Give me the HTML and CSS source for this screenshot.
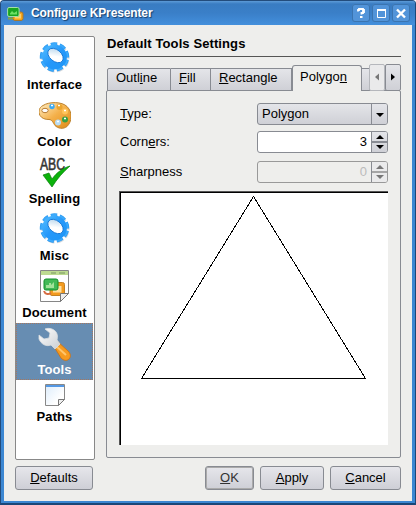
FILE: index.html
```html
<!DOCTYPE html>
<html lang="en">
<head>
<meta charset="utf-8">
<title>Configure KPresenter</title>
<link rel="stylesheet" href="styles.css">
</head>
<body>
<svg class="defs" width="0" height="0">
  <defs>
    <linearGradient id="blue" x2="1" y2="1"><stop stop-color="#55bfff"/><stop offset=".5" stop-color="#2598fa"/><stop offset="1" stop-color="#1e96f6"/></linearGradient>
    <linearGradient id="hole" x2="1" y2="1"><stop stop-color="#a9cde8"/><stop offset=".55" stop-color="#fff"/></linearGradient>
    <linearGradient id="gold" x2="1" y2="1"><stop stop-color="#fff0c8"/><stop offset=".5" stop-color="#f4b04a"/><stop offset="1" stop-color="#de8a18"/></linearGradient>
    <linearGradient id="steel" x2="1" y2="1"><stop stop-color="#fff"/><stop offset="1" stop-color="#c9ced3"/></linearGradient>
    <linearGradient id="sheet" x2="1" y2="1"><stop stop-color="#dcecfb"/><stop offset=".7" stop-color="#fff"/></linearGradient>
    <symbol id="gear" viewBox="0 0 32 32">
      <g transform="rotate(12 15.500 15)">
        <circle cx="16.300" cy="16" r="12.400" fill="none" stroke="#b4bcc4" stroke-width="4" stroke-dasharray="6 2.656" opacity=".6"/>
        <circle cx="15.500" cy="15" r="12.400" fill="none" stroke="#2898f0" stroke-width="4.600" stroke-dasharray="6 2.656"/>
        <circle cx="15.500" cy="15" r="12.400" fill="none" stroke="#3caafc" stroke-width="3.400" stroke-dasharray="5.200 3.456" stroke-dashoffset="-.4"/>
      </g>
      <circle cx="15.500" cy="15" r="12.400" fill="url(#blue)"/>
      <ellipse cx="16.500" cy="13.500" rx="8.800" ry="5.800" transform="rotate(40 16.500 13.500)" fill="url(#hole)" stroke="#1477d6" stroke-width=".9"/>
    </symbol>
  </defs>
</svg>
<div class="window">
  <header class="titlebar">
    <svg class="app-icon" width="17" height="16" viewBox="0 0 17 16"><rect x="6" y="6" width="10" height="8.500" rx="2" fill="#f6a51c" stroke="#a8772a"/><rect x="8" y="8" width="6" height="4.500" fill="#ffcf68"/><rect x=".6" y="1.500" width="11.500" height="9" rx="1.500" fill="#18a522" stroke="#a4dfa8"/><path d="M3 7.500l2-2.500 2 2 3-2v3.500H3" fill="#6ce063"/><path d="M1 12.500h5" stroke="#8fa13d" stroke-width="2"/></svg>
    <h1>Configure KPresenter</h1>
    <div class="wbtn"><svg width="18" height="19"><path d="M6 7.500V6h1V5h4v1h1v2h-1v1H9.500v1.500" fill="none" stroke="#fff" stroke-width="1.800"/><rect x="8" y="12" width="2.500" height="2" fill="#fff"/></svg></div>
    <div class="wbtn"><svg width="18" height="19"><path d="M5.500 5.500h8v8h-8z" fill="none" stroke="#fff"/><path d="M5 5h9v2H5z" fill="#fff"/></svg></div>
    <div class="wbtn"><svg width="18" height="19"><path d="M5 5.500l8 8M13 5.500l-8 8" stroke="#fff" stroke-width="2.400"/></svg></div>
  </header>
  <main class="body">
    <nav class="sidebar">
      <div class="item"><svg width="32" height="32"><use href="#gear"/></svg><span>Interface</span></div>
      <div class="item"><svg width="32" height="32" viewBox="0 0 32 32"><g transform="translate(0 1.500)"><path d="M4 5C10 1 23 1 28 6c6 6 5 15 0 20-4 3-9 2-12-1-2-3-3-6-6-6-4 0-7-1-9-4C-1 11 0 7 4 5z" fill="url(#gold)" stroke="#bd822d" stroke-width="1"/><ellipse cx="6" cy="10" rx="3.200" ry="2.200" fill="#fff" stroke="#b87d34"/><circle cx="13" cy="6" r="2.700" fill="#3ea8ee"/><circle cx="20.500" cy="6.500" r="3" fill="#eba52d"/><circle cx="26" cy="11" r="3" fill="#ffc45a"/><circle cx="26" cy="19" r="3" fill="#37a044"/><circle cx="19" cy="22" r="3" fill="#b7dcf2"/><path d="M12 5h2M19 5h2M25 10h2M25 18h2M18 21h2" stroke="#fff" stroke-width="1.300"/></g></svg><span>Color</span></div>
      <div class="item"><svg class="abc" width="32" height="32" viewBox="0 0 32 32"><text x="1" y="14" textLength="25" lengthAdjust="spacingAndGlyphs">ABC</text><path d="M4 19l6-2 3 6C18 16 24 12 31 10c-7 6-13 13-18 21z" fill="#0bb20b" stroke="#087c0b" stroke-width=".7"/></svg><span>Spelling</span></div>
      <div class="item"><svg width="32" height="32"><use href="#gear"/></svg><span>Misc</span></div>
      <div class="item"><svg width="32" height="32" viewBox="0 0 32 32"><path d="M1.500.5h28v23l-8 8h-20z" fill="#fff" stroke="#868686"/><path d="M2 1h27v4H2z" fill="#bddb91"/><path d="M12 3h5M20 3h6" stroke="#799661"/><rect x="11" y="12.500" width="14.500" height="13" rx="2" fill="#f39b1e" stroke="#c48123"/><rect x="14" y="16" width="8.500" height="6.500" fill="#ffe0a0"/><rect x="5" y="9" width="14" height="11" rx="2" fill="#43b956" stroke="#138d2a"/><path d="M7 15h3v-2h2v2l3-3v6H7z" fill="#a2e299"/><path d="M5 21c1 3 4 4 7 2" stroke="#d56d43" stroke-width="2" fill="none"/><path d="M21.500 31.500v-8h8z" fill="#eee" stroke="#777"/></svg><span>Document</span></div>
      <div class="item selected"><svg width="34" height="34" viewBox="0 0 34 34"><path d="M15 18l4-4 11 10c3 3 3 6 1 8s-5 2-8-1z" fill="#f69b20" stroke="#c9761f"/><path d="M18 19l10 9" stroke="#ffc66c" stroke-width="2"/><path d="M7 2c5-2 11 1 12 5 1 3 0 5 0 6l3 4-5 5-4-4C8 20 3 17 1 12V8l5 4 5-1 1-5z" fill="url(#steel)" stroke="#d9dde0" stroke-width=".8"/></svg><span>Tools</span></div>
      <div class="item paths"><svg width="22" height="23" viewBox="0 0 22 23"><path d="M1.500.5h19v15l-6 6h-13z" fill="url(#sheet)" stroke="#888"/><path d="M2 1h18v2H2z" fill="#5498e4"/><path d="M14.500 21.500v-6h6z" fill="#eee" stroke="#777"/></svg><span>Paths</span></div>
    </nav>
    <section class="page">
      <h2>Default Tools Settings</h2>
      <div class="tabs">
        <div class="tab outline">Outl<u>i</u>ne</div><div class="tab fill"><u>F</u>ill</div><div class="tab rect"><u>R</u>ectangle</div><div class="tab active">Polygo<u>n</u></div><div class="tab cut"></div>
        <div class="scroll off"><svg width="14" height="24"><path d="M9 8.500v7l-4-3.500z" fill="#777"/></svg></div><div class="scroll"><svg width="14" height="24"><path d="M5 8.500v7l4-3.500z"/></svg></div>
      </div>
      <div class="panel">
        <div class="row"><label><u>T</u>ype:</label><div class="field combo"><span>Polygon</span><i><svg width="15" height="20"><path d="M4 9h8l-4 4z"/></svg></i></div></div>
        <div class="row"><label>Corn<u>e</u>rs:</label><div class="field spin"><span>3</span><i><svg width="15" height="20"><path d="M4 7h8L8 3zM4 13h8l-4 4z"/><path d="M0 10h15" stroke="#888b92" stroke-width="2"/></svg></i></div></div>
        <div class="row last"><label><u>S</u>harpness</label><div class="field spin disabled"><span>0</span><i><svg width="15" height="20"><path d="M4 7h8L8 3zM4 13h8l-4 4z" fill="#777"/><path d="M0 10h15" stroke="#a5a5a5" stroke-width="2"/></svg></i></div></div>
        <div class="preview"><svg width="267" height="252" shape-rendering="crispEdges"><path d="M132.500 3.500L20.500 185.500H244.500z" fill="none" stroke="#000"/></svg></div>
      </div>
    </section>
    <footer class="buttons">
      <button class="defaults"><u>D</u>efaults</button><button class="ok"><u>O</u>K</button><button class="apply"><u>A</u>pply</button><button class="cancel"><u>C</u>ancel</button>
    </footer>
  </main>
</div>
</body>
</html>
```

FILE: styles.css
```css
* { box-sizing: border-box; }
body { margin: 0; background: #fff; font: 13px/16px "Liberation Sans", Arial, sans-serif; color: #000; }
svg { display: block; flex: none; }
.defs { position: absolute; }
u { text-decoration: underline; text-decoration-thickness: 1px; text-underline-offset: 1px; text-decoration-skip-ink: none; }
.window { width: 416px; height: 505px; border: solid; border-width: 1px 1px 2px 1px; border-color: #234c7c #1a4778 #1a4778 #234c7c; background: #3c87d2; border-radius: 4px 4px 0 0; padding: 0 3px 2px; }
.titlebar { height: 24px; margin: 0 -3px; padding: 3px 5px 0 6px; display: flex; background: linear-gradient(#5d9bd8 0, #397cc2 3px, #3a7fc8 50%, #438fdc); border-radius: 3px 3px 0 0; }
.app-icon { margin-top: 2px; }
h1 { margin: 2px auto 0 7px; font-size: 12px; line-height: 14px; letter-spacing: -.13px; color: #fff; text-shadow: 1px 1px 1px #163e6b; white-space: nowrap; }
.wbtn { width: 18px; height: 18px; margin-left: 2px; border-radius: 3px; background: #5294d9; box-shadow: inset 0 0 0 1px #3a74b0; }
.body { height: 476px; background: #eeeeec; padding: 11px 11px 0; display: grid; grid-template-columns: 80px 295px; grid-template-rows: 424px 24px; column-gap: 11px; row-gap: 6px; }
.sidebar { background: #fff; border: 1px solid #888; border-radius: 2px; padding: 1px 1px 0 0; }
.item { height: 57px; display: flex; flex-direction: column; align-items: center; padding-top: 4px; font-weight: bold; font-size: 13px; letter-spacing: .1px; line-height: 16px; white-space: nowrap; }
.item span { margin-top: 3px; }
.selected { background: #678db2; color: #fff; outline: 1px dotted #a7775e; outline-offset: -1px; }
.selected svg { margin-bottom: -2px; }
.paths { height: 48px; }
.paths span { margin-top: 2px; }
.abc { overflow: visible; }
.abc text { font: 16px/16px "Liberation Sans", sans-serif; letter-spacing: 0; fill: #343434; stroke: #343434; stroke-width: .6px; }
.page { display: flex; flex-direction: column; }
h2 { margin: 0 0 7px; height: 22px; padding: 0 0 0 1px; border-bottom: 1px solid #555; font-size: 13px; line-height: 16px; letter-spacing: .1px; }
.tabs { height: 27px; display: flex; align-items: flex-end; margin-bottom: -1px; position: relative; }
.tab { height: 23px; border: 1px solid #888b92; border-left-width: 0; background: linear-gradient(#e4e5e9, #cfd0d6); padding: 1px 0 0 8px; white-space: nowrap; }
.outline { width: 64px; margin-left: 1px; border-left-width: 1px; border-radius: 2px 0 0; }
.fill { width: 40px; }
.rect { width: 81px; }
.tab.active { width: 70px; height: 26px; border-left-width: 1px; border-bottom: 0; background: #eeeeec; border-radius: 3px 3px 0 0; padding: 3px 0 0 7px; }
.cut { width: 8px; padding: 0; margin-right: -1px; }
.scroll { width: 16px; height: 27px; border: 1px solid #888b92; border-radius: 2px; background: linear-gradient(#e4e5e9, #cfd0d6); }
.off { border-color: #b5b7bc; background: #eaeaeb; }
.panel { flex: 1; border: 1px solid #888b92; border-radius: 2px; padding: 12px; margin-bottom: 2px; }
.row { height: 22px; margin-bottom: 6px; padding-left: 1px; display: flex; justify-content: space-between; align-items: center; }
.row.last { margin: 8px 0; }
.row label { display: block; }
.field { width: 131px; height: 22px; border: 1px solid #888b92; border-radius: 3px; display: flex; background: #fff; overflow: hidden; }
.field span { flex: 1; padding: 2px 4px; }
.field i { width: 16px; border-left: 1px solid #888b92; background: linear-gradient(#e4e5e9, #cfd0d6); }
.combo { background: linear-gradient(#e4e5e9, #cfd0d6); }
.spin span { text-align: right; }
.disabled { background: #eeeeec; border-color: #999; color: #bbb; }
.disabled i { background: #eaeaeb; }
.preview { height: 254px; width: 269px; border: solid #555; border-width: 1px 0 0 1px; padding: 1px 0 0 1px; background: #fff; box-shadow: inset 1px 1px 0 #000; }
.buttons { grid-column: 1 / 3; display: flex; }
button { height: 24px; padding: 0; border: 1px solid #888b92; border-radius: 3px; background: linear-gradient(#e6e6eb, #cecfd6); font: inherit; color: #000; }
.defaults { width: 78px; margin-right: auto; }
.ok { width: 49px; box-shadow: inset 0 0 0 1px #aaa; color: #333; }
.apply { width: 64px; margin-left: 6px; }
.cancel { width: 71px; margin-left: 6px; }
```
